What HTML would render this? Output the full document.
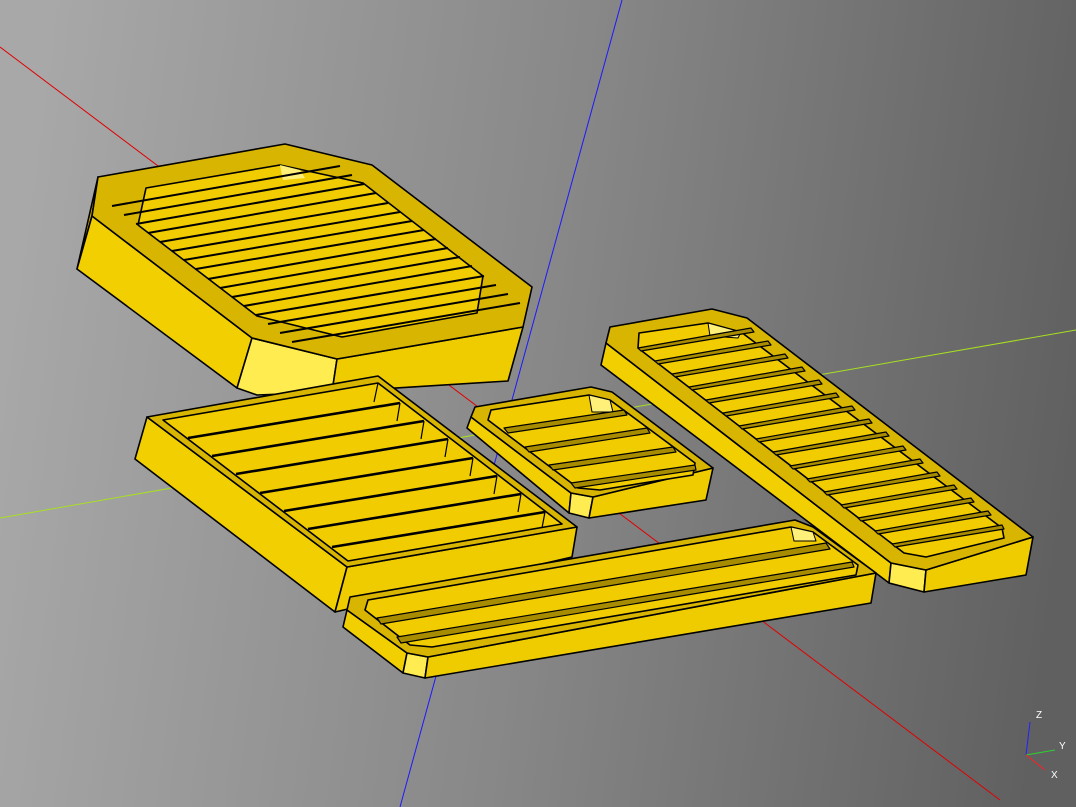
<!DOCTYPE html>
<html><head><meta charset="utf-8"><style>html,body{margin:0;padding:0;overflow:hidden}svg{display:block}</style></head>
<body>
<svg width="1076" height="807" viewBox="0 0 1076 807" xmlns="http://www.w3.org/2000/svg">
<defs>
<linearGradient id="bg" x1="0" y1="0.45" x2="1" y2="0.55">
<stop offset="0" stop-color="#a8a8a8"/>
<stop offset="0.5" stop-color="#888888"/>
<stop offset="1" stop-color="#606060"/>
</linearGradient>
</defs>
<rect width="1076" height="807" fill="url(#bg)"/>
<line x1="0" y1="47" x2="1000" y2="800" stroke="#e00000" stroke-width="1"/>
<line x1="622" y1="0" x2="400" y2="807" stroke="#1a1aff" stroke-width="1"/>
<line x1="0" y1="518" x2="1076" y2="330" stroke="#a8e020" stroke-width="1"/>

<g stroke="#000" stroke-width="1.6" stroke-linejoin="round">
<!-- Shape 1 -->
<polygon points="98,177 92,216 77,269" fill="#c8a800"/>
<polygon points="92,216 252,338 237,388 77,269" fill="#f2cf00"/>
<polygon points="252,338 337,359 332,392 257,395 237,388" fill="#ffec50"/>
<polygon points="337,359 523,327 508,381 332,392" fill="#efcc00"/>
<polygon points="98,177 285,144 372,165 532,287 523,327 337,359 252,338 92,216" fill="#d8b500"/>
<polygon points="146,188 280,165 363,183 483,276 477,313 342,337 257,316 138,225" fill="#f0cc00"/>
<polygon points="280,165 300,170 305,178 283,180" fill="#fff07a" stroke="none"/>
<g stroke-width="2">
<line x1="112" y1="206" x2="340" y2="166"/><line x1="124" y1="215" x2="352" y2="175"/>
<line x1="136" y1="224" x2="364" y2="184"/><line x1="148" y1="233" x2="376" y2="193"/>
<line x1="160" y1="242" x2="388" y2="203"/><line x1="172" y1="251" x2="400" y2="212"/>
<line x1="184" y1="260" x2="412" y2="221"/><line x1="196" y1="269" x2="424" y2="230"/>
<line x1="208" y1="279" x2="436" y2="239"/><line x1="220" y1="288" x2="448" y2="248"/>
<line x1="232" y1="297" x2="460" y2="257"/><line x1="244" y1="306" x2="472" y2="266"/>
<line x1="256" y1="315" x2="484" y2="276"/><line x1="268" y1="324" x2="496" y2="285"/>
<line x1="280" y1="333" x2="508" y2="294"/><line x1="292" y1="342" x2="520" y2="303"/>
</g>

<!-- Shape 2 -->
<polygon points="147,417 347,567 335,612 135,459" fill="#f2cf00"/>
<polygon points="347,567 577,527 572,557 335,612" fill="#efcc00"/>
<polygon points="147,417 378,376 577,527 347,567" fill="#d8b500"/>
<polygon points="163,420 378,383 562,524 348,561" fill="#f0cc00"/>
<g stroke-width="2.6">
<line x1="188" y1="438" x2="400" y2="403"/><line x1="212" y1="456" x2="424" y2="421"/>
<line x1="236" y1="474" x2="448" y2="439"/><line x1="260" y1="493" x2="473" y2="458"/>
<line x1="284" y1="511" x2="497" y2="476"/><line x1="308" y1="529" x2="521" y2="494"/>
<line x1="332" y1="547" x2="545" y2="512"/>
</g>
<g stroke-width="1.2">
<line x1="400" y1="403" x2="397" y2="421"/><line x1="424" y1="421" x2="421" y2="439"/>
<line x1="448" y1="439" x2="445" y2="457"/><line x1="473" y1="458" x2="470" y2="476"/>
<line x1="497" y1="476" x2="494" y2="494"/><line x1="521" y1="494" x2="518" y2="512"/>
<line x1="545" y1="512" x2="542" y2="528"/><line x1="378" y1="383" x2="374" y2="402"/>
</g>

<!-- Shape 3 -->
<polygon points="471,417 571,493 569,513 467,428" fill="#f2cf00"/>
<polygon points="571,493 593,497 589,518 569,513" fill="#ffec50"/>
<polygon points="593,497 713,468 706,500 589,518" fill="#efcc00"/>
<polygon points="475,407 591,387 612,392 713,468 593,497 571,493 471,417" fill="#d8b500"/>
<polygon points="491,410 589,395 610,400 695,463 693,475 600,490 578,488 488,420" fill="#f0cc00"/>
<polygon points="589,395 610,400 613,412 592,412" fill="#fff07a" stroke-width="1"/>
<g stroke-width="1.2" fill="#a88c00">
<polygon points="504,428 624,410 627,415 508,433"/>
<polygon points="525,447 647,428 650,433 529,452"/>
<polygon points="549,465 673,447 676,452 553,470"/>
<polygon points="571,483 695,465 696,470 575,488"/>
</g>

<!-- Shape 4 -->
<polygon points="606,343 891,563 889,583 601,365" fill="#f2cf00"/>
<polygon points="891,563 926,570 924,592 889,583" fill="#ffec50"/>
<polygon points="926,570 1033,537 1026,575 924,592" fill="#efcc00"/>
<polygon points="610,327 712,309 747,318 1033,537 926,570 891,563 606,343" fill="#d8b500"/>
<polygon points="639,333 708,323 741,332 1002,528 1004,538 926,557 904,553 638,348" fill="#f0cc00"/>
<polygon points="708,323 741,332 738,338 710,336" fill="#fff07a" stroke-width="1"/>
<g stroke-width="1.2" fill="#a88c00">
<polygon points="638,348 751,328 754,332 641,351"/>
<polygon points="655,361 768,341 771,345 658,364"/>
<polygon points="672,374 785,354 788,358 675,377"/>
<polygon points="689,387 802,367 805,371 692,390"/>
<polygon points="706,400 819,380 822,384 709,403"/>
<polygon points="723,413 836,393 839,397 726,416"/>
<polygon points="739,426 852,406 855,410 742,429"/>
<polygon points="756,439 869,419 872,423 759,442"/>
<polygon points="773,452 886,432 889,436 776,455"/>
<polygon points="790,466 903,446 906,450 793,469"/>
<polygon points="807,479 920,459 923,463 810,482"/>
<polygon points="824,492 937,472 940,476 827,495"/>
<polygon points="841,505 954,485 957,489 844,508"/>
<polygon points="858,518 971,498 974,502 861,521"/>
<polygon points="875,531 988,511 991,515 878,534"/>
<polygon points="892,544 1002,525 1004,529 895,547"/>
</g>

<!-- Shape 5 -->
<polygon points="347,610 407,653 403,673 343,627" fill="#f2cf00"/>
<polygon points="407,653 428,657 425,678 403,673" fill="#ffec50"/>
<polygon points="428,657 876,573 871,603 425,678" fill="#efcc00"/>
<polygon points="350,597 795,520 813,527 876,573 428,657 407,653 347,610" fill="#d8b500"/>
<polygon points="368,600 791,527 813,532 858,565 856,575 432,647 410,645 365,610" fill="#f0cc00"/>
<polygon points="791,527 813,532 816,541 794,541" fill="#fff07a" stroke-width="1"/>
<g stroke-width="1.2" fill="#a88c00">
<polygon points="377,618 826,543 830,549 381,624"/>
<polygon points="397,637 852,562 854,567 401,643"/>
</g>
</g>

<!-- axis indicator -->
<g stroke-width="1">
<line x1="1026" y1="755" x2="1030" y2="722" stroke="#2020ff"/>
<line x1="1026" y1="755" x2="1055" y2="750" stroke="#30d030"/>
<line x1="1026" y1="755" x2="1045" y2="770" stroke="#ff2020"/>
</g>
<g font-family="Liberation Sans, sans-serif" font-size="10" fill="#ffffff">
<text x="1036" y="718">Z</text>
<text x="1059" y="749">Y</text>
<text x="1051" y="778">X</text>
</g>
</svg>
</body></html>
